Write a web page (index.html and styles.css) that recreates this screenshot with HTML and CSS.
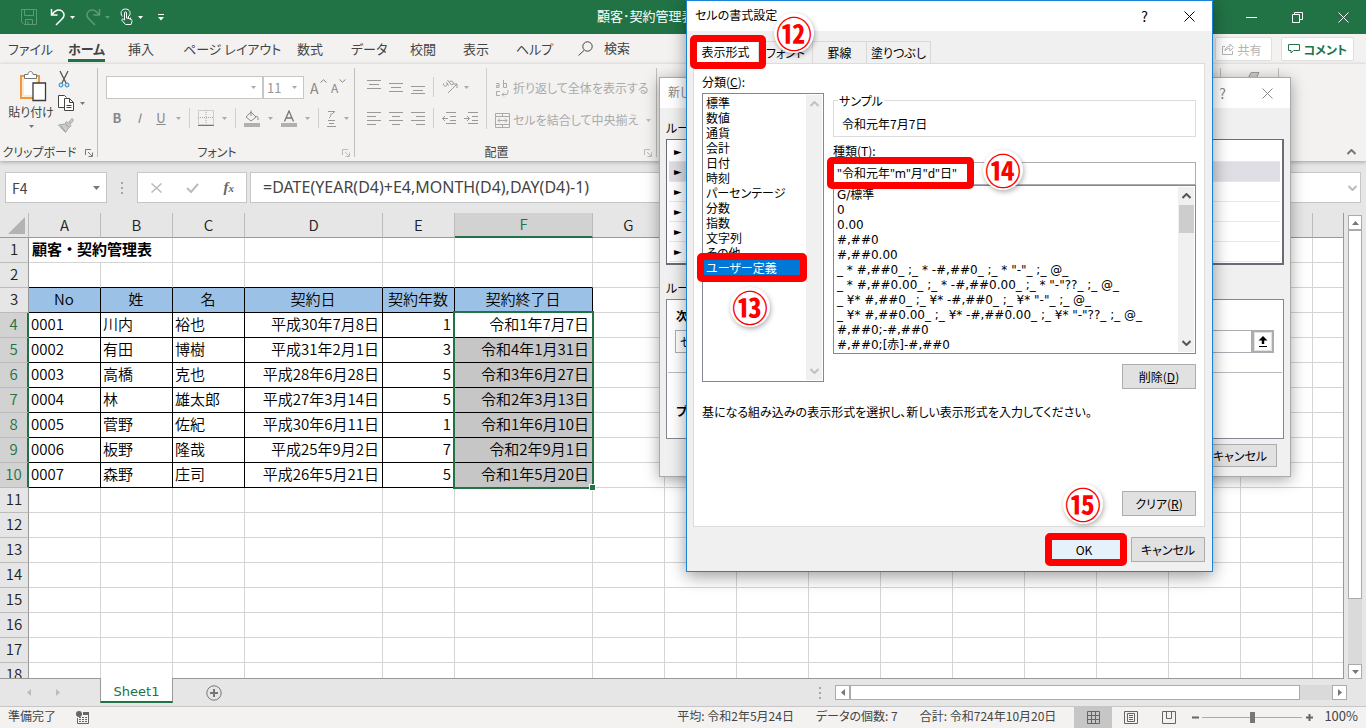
FILE: index.html
```html
<!DOCTYPE html>
<html lang="ja">

<head>
<meta charset="utf-8" />
<title>顧客・契約管理表</title>
<link rel="stylesheet" href="styles.css">
</head>

<body>

<div class="app">

<header class="titlebar">
	<div class="quick">
		<button class="tb dim" aria-label="上書き保存"><svg width="18" height="18" viewBox="0 0 18 18"><path d="M1.5 1.5h15v15H4l-2.5-2.5zM4.500 1.500v6h9v-6M5.500 16.500v-5h7v5M8 16.500v-3"/></svg></button>
		<button class="tb" aria-label="元に戻す"><svg width="16" height="18" viewBox="0 0 16 18"><path class="w15" d="M1.500 1v6h6M2 6.500C5 2 9 .8 12 3c3.500 3 2 6 0 8l-6 6"/></svg></button>
		<svg class="arr" width="5" height="3"><path d="M0 0h5L2.500 3z"/></svg>
		<button class="tb dim" aria-label="やり直し"><svg width="16" height="18" viewBox="0 0 16 18"><path class="w15" d="M14.500 1v6h-6M14 6.500C11 2 7 .8 4 3c-3.500 3-2 6 0 8l6 6"/></svg></button>
		<svg class="arr dimarr" width="5" height="3"><path d="M0 0h5L2.500 3z"/></svg>
		<button class="tb" aria-label="タッチ"><svg width="14" height="18" viewBox="0 0 14 18"><path d="M2.500 8.500C-.5 5 1.500 1 5.500 1s6 4 3.500 7M4.500 12V5c0-1.500 2-1.500 2 0v5l4 1c1.500.4 1.500 1.500 1.500 2.500L11 16.500H5.500L2 12.500c-.6-1 .5-2 1.500-1.300L4.500 12M8.500 8V11M10.500 9.500v2"/></svg></button>
		<svg class="arr" width="5" height="3"><path d="M0 0h5L2.500 3z"/></svg>
		<svg class="arr more" width="6" height="7"><path d="M0 0h6v1H0zM0 3h6L3 6.500z"/></svg>
	</div>
	<div class="doctitle">顧客･契約管理表</div>
	<div class="wins">
		<button class="win" aria-label="最小化"><svg width="11" height="11"><path d="M0 5.500h11"/></svg></button>
		<button class="win" aria-label="元のサイズ"><svg width="11" height="11"><path d="M.5 2.500h7v8h-7zM2.500 2.500v-2h8v7h-3"/></svg></button>
		<button class="win" aria-label="閉じる"><svg width="11" height="11"><path d="M.5.5l10 10M10.500.5l-10 10"/></svg></button>
	</div>
</header>

<nav class="tabs">
	<a href="#">ファイル</a>
	<a href="#" class="on">ホーム</a>
	<a href="#">挿入</a>
	<a href="#">ページ レイアウト</a>
	<a href="#">数式</a>
	<a href="#">データ</a>
	<a href="#">校閲</a>
	<a href="#">表示</a>
	<a href="#">ヘルプ</a>
	<a href="#" class="find"><svg width="15" height="15"><path d="M6 9.500L.5 14.500"/><circle cx="9.500" cy="5.500" r="4.700"/></svg>検索</a>
	<span class="tabbtns">
		<button class="share"><svg width="12" height="12"><path d="M3 3.500H.5v8h10V8M3 8c0-3 2-4.500 5-4.500V1l3.500 3.500L8 8V5.500C6 5.500 4 6 3 8z"/></svg>共有</button>
		<button class="comment"><svg width="12" height="10"><path d="M.5.5h11v6H5.500L3 9V6.500H.5z"/></svg>コメント</button>
	</span>
</nav>

<section class="ribbon">
	<div class="group clip">
		<div class="cliprow">
			<button class="paste">
				<svg width="28" height="32" viewBox="0 0 28 32"><path fill="#fff" stroke="#f0963c" stroke-width="2" d="M2 5h18v22H2z"/><path fill="#fdfdfd" stroke="#fbd98f" d="M4 7h14v18H4z"/><path fill="#fff" stroke="#777" d="M5.500 7.500v-4H9c0-4 5-4 5 0h3.500v4z"/><path fill="#fff" stroke="#3b3b3b" stroke-width="1.300" d="M14 12h12.500v17.500H14z"/></svg>
				<span>貼り付け</span>
				<svg class="arr" width="5" height="3"><path d="M0 0h5L2.500 3z"/></svg>
			</button>
			<div class="clipcol">
				<button class="ic" aria-label="切り取り"><svg width="12" height="17"><path stroke="#555" stroke-width="1.300" d="M2 0l6 12M10 0L4 12"/><circle cx="3" cy="14" r="2" fill="#cfe6f8" stroke="#2a86c8"/><circle cx="9" cy="14" r="2" fill="#cfe6f8" stroke="#2a86c8"/></svg></button>
				<button class="ic" aria-label="コピー"><svg width="16" height="16"><path stroke="#444" fill="#fff" d="M6 12.500H.5V.5h6l2 2"/><path stroke="#444" fill="#fff" d="M6.500 3.500h5l4 4v8h-9zM11.500 3.500v4h4M8.500 10.500h5M8.500 12.500h5"/></svg><svg class="arr" width="5" height="3"><path d="M0 0h5L2.500 3z"/></svg></button>
				<button class="ic" aria-label="書式のコピー"><svg width="16" height="15"><path fill="#ccc" stroke="#a5a5a5" d="M.5 7l6-1 4 4-3 4.500zM7 5l2-1.500 4 4L11.500 9.500zM11 4l3-3.500 1.500 1.500L13 5.500zM3 8l4 5"/></svg></button>
			</div>
		</div>
		<div class="cap">クリップボード</div><svg class="launch" width="8" height="8"><path d="M.5 6V.5H6M3 3l4 4M7.500 3.500v4h-4"/></svg>
	</div>
	<div class="group font">
		<div class="frow">
			<span class="combo fname"><select aria-label="フォント"><option></option></select><svg class="arr" width="5" height="3"><path d="M0 0h5L2.500 3z"/></svg></span><span class="combo fsize"><select aria-label="フォント サイズ"><option>11</option></select><svg class="arr" width="5" height="3"><path d="M0 0h5L2.500 3z"/></svg></span>
			<button class="gt big">A<svg width="7" height="4"><path d="M.5 3.500L3.500.8 6.500 3.500"/></svg></button>
			<button class="gt">A<svg width="7" height="4"><path d="M.5.5l3 2.700 3-2.700"/></svg></button>
		</div>
		<div class="frow second">
			<button class="gt"><b>B</b></button>
			<button class="gt"><i>I</i></button>
			<button class="gt"><u>U</u></button>
			<svg class="arr" width="5" height="3"><path d="M0 0h5L2.500 3z"/></svg>
			<i class="vs"></i>
			<button class="ic" aria-label="罫線"><svg width="16" height="16"><path stroke="#aaa" stroke-dasharray="1 1" d="M.5.5h15v14H.5zM8 0v14M0 7.500h15"/><path stroke="#777" d="M0 15.500h16"/></svg></button>
			<svg class="arr" width="5" height="3"><path d="M0 0h5L2.500 3z"/></svg>
			<i class="vs"></i>
			<button class="ic" aria-label="塗りつぶしの色"><svg width="16" height="17"><path stroke="#888" d="M2 7l5-5 5 5-5 4zM7 6V.5M12 7c2-2 2 1 2 3"/><path fill="#b3afad" stroke="none" d="M0 13h16v4H0z"/></svg></button>
			<svg class="arr" width="5" height="3"><path d="M0 0h5L2.500 3z"/></svg>
			<button class="ic" aria-label="フォントの色"><svg width="16" height="17"><path stroke="#777" stroke-width="1.300" d="M3.500 11.500L8 1l4.500 10.500M5 8h6"/><path fill="#b3afad" stroke="none" d="M0 13h16v4H0z"/></svg></button>
			<svg class="arr" width="5" height="3"><path d="M0 0h5L2.500 3z"/></svg>
			<i class="vs"></i>
			<button class="ic" aria-label="ふりがな"><svg width="9" height="17"><path stroke="#999" d="M1 1.500h7L5 4M4 3.500C4 6 3.500 7 2 8M1 10.500h7M2 13.500h5M0 16.500h9"/></svg></button>
			<svg class="arr" width="5" height="3"><path d="M0 0h5L2.500 3z"/></svg>
		</div>
		<div class="cap">フォント</div><svg class="launch pale" width="8" height="8"><path d="M.5 6V.5H6M3 3l4 4M7.500 3.500v4h-4"/></svg>
	</div>
	<div class="group align">
		<div class="alignrow">
			<div class="aligncol">
				<div class="arow">
					<svg width="14" height="14"><path d="M0 .5h14M2 4.500h10M0 8.500h14"/></svg>
					<svg width="14" height="14"><path d="M0 3.500h14M2 7.500h10M0 11.500h14"/></svg>
					<svg width="14" height="14"><path d="M0 6.500h14M2 10.500h10M0 13.500h14"/></svg>
					<i class="vs"></i>
					<svg width="18" height="16"><path d="M6 14L15 5M11 5h4v4M1.500 4.500a2 2 0 1 0 3-1l2 3M5.500 1l4 5a2 2 0 1 0-2-3"/></svg>
					<svg class="arr" width="5" height="3"><path d="M0 0h5L2.500 3z"/></svg>
				</div>
				<div class="arow">
					<svg width="14" height="14"><path d="M0 1.500h14M0 5.500h9M0 9.500h14M0 13.500h9"/></svg>
					<svg width="14" height="14"><path d="M0 1.500h14M3 5.500h8M0 9.500h14M3 13.500h8"/></svg>
					<svg width="14" height="14"><path d="M0 1.500h14M5 5.500h9M0 9.500h14M5 13.500h9"/></svg>
					<i class="vs"></i>
					<svg width="14" height="14"><path d="M4 1.500h10M8 5.500h6M8 9.500h6M4 12.500h10M6 7.500H.5M3 5L.5 7.500 3 10"/></svg>
					<svg width="14" height="14"><path d="M4 1.500h10M8 5.500h6M8 9.500h6M4 12.500h10M0 7.500h5.500M3 5l2.500 2.500L3 10"/></svg>
				</div>
			</div>
			<div class="wraps">
				<button class="gt"><svg width="15" height="17"><path d="M1 3.500h3v4H1.500v-2H4M8.500 0v7.500h3v-4h-3M5 11.500H1.500v4H5M13 10v2l-1 2.500H7M9 12.500L7 14.500l2 2"/></svg>折り返して全体を表示する</button>
				<button class="gt"><svg width="15" height="15"><path d="M.5.5h14v14H.5zM.5 3.500h14M.5 11.500h14M7.500 0v3M7.500 12v3M3 7.500h9M5 5.500l-2 2 2 2M10 5.500l2 2-2 2"/></svg>セルを結合して中央揃え<svg class="arr" width="5" height="3"><path d="M0 0h5L2.500 3z"/></svg></button>
			</div>
		</div>
		<div class="cap">配置</div><svg class="launch pale" width="8" height="8"><path d="M.5 6V.5H6M3 3l4 4M7.500 3.500v4h-4"/></svg>
	</div>
	<div class="group rest"></div>
	<div class="group edit"><svg width="14" height="14"><path fill="#ccc" stroke="#999" d="M5 1.500h8L9 9.500H1z"/></svg></div>
	<svg class="fold" width="9" height="6"><path d="M.5 5L4.500 1 8.500 5"/></svg>
</section>

<section class="formulabar">
	<span class="box namebox"><input type="text" value="F4" aria-label="名前ボックス"><svg class="arr" width="7" height="4"><path d="M0 0h7L3.500 4z"/></svg></span>
	<i class="dots"></i>
	<span class="box fx">
		<svg width="11" height="10"><path class="w15" d="M.5.5l10 9M10.500.5l-10 9"/></svg>
		<svg width="13" height="10"><path class="w2" d="M1 5l4 4 7-8"/></svg>
		<em>f<small>x</small></em>
	</span>
	<span class="box formula"><input type="text" value="=DATE(YEAR(D4)+E4,MONTH(D4),DAY(D4)-1)" aria-label="数式"><svg width="9" height="6"><path class="w2" d="M.5 1L4.500 5 8.500 1"/></svg></span>
</section>

<main class="work">
	<div class="sheet">
		<table class="grid" id="grid"></table>
	</div>
	<div class="vscroll">
		<button aria-label="上へ"><svg class="arr" width="7" height="4"><path d="M0 4h7L3.500 0z"/></svg></button>
		<div class="vthumb"></div>
		<div class="track"></div>
		<button aria-label="下へ"><svg class="arr" width="7" height="4"><path d="M0 0h7L3.500 4z"/></svg></button>
	</div>
</main>

<div class="sheetbar">
	<svg class="arr nav" width="4" height="7"><path d="M4 0v7L0 3.500z"/></svg>
	<svg class="arr nav" width="4" height="7"><path d="M0 0v7l4-3.500z"/></svg>
	<button class="sheettab">Sheet1</button>
	<button class="add" aria-label="新しいシート"><svg width="16" height="16"><circle cx="8" cy="8" r="7.200"/><path class="w2" d="M8 4v8M4 8h8"/></svg></button>
	<i class="dots"></i>
	<div class="hscroll">
		<button aria-label="左へ"><svg class="arr" width="4" height="7"><path d="M4 0v7L0 3.500z"/></svg></button>
		<div class="hthumb"></div>
		<div class="track"></div>
		<button aria-label="右へ"><svg class="arr" width="4" height="7"><path d="M0 0v7l4-3.500z"/></svg></button>
	</div>
</div>

<footer class="status">
	<span>準備完了</span>
	<svg class="rec" width="13" height="13"><path class="ln" d="M1.500 7v5.500h11V1.500H7M7 3.500h6"/><path class="ln" d="M3 6.500h8M3 8.500h8M3 10.500h8" stroke-dasharray="2 1"/><circle cx="3" cy="3" r="3"/><path d="M7 1h6v3H7z"/></svg>
	<span class="sums"><span>平均: 令和2年5月24日</span><span>データの個数: 7</span><span>合計: 令和724年10月20日</span></span>
	<button class="view on" aria-label="標準"><svg width="13" height="13"><path d="M.5.5h12v12H.5zM4.500 0v13M8.500 0v13M0 4.500h13M0 8.500h13"/></svg></button>
	<button class="view" aria-label="ページ レイアウト"><svg width="14" height="13"><path d="M.5.5h13v12H.5zM3.500 2.500h7v8h-7zM5 4.500h4M5 6.500h4M5 8.500h4"/></svg></button>
	<button class="view" aria-label="改ページ プレビュー"><svg width="14" height="13"><path d="M.5.5h13v12H.5zM4.500 0v7.500h5V0"/></svg></button>
	<button class="zb" aria-label="縮小"><svg width="7" height="7"><path class="w2" d="M0 3.500h7"/></svg></button>
	<input class="zoom" type="range" min="0" max="100" value="50" aria-label="ズーム">
	<button class="zb" aria-label="拡大"><svg width="7" height="7"><path class="w2" d="M0 3.500h7M3.500 0v7"/></svg></button>
	<span class="pct">100%</span>
</footer>

</div>

<!-- rule dialog, below the format dialog -->
<div class="dialog rule">
	<div class="dtitle"><span>新しい書式ルール</span><button>?</button><button aria-label="閉じる"><svg width="11" height="11"><path d="M.5.5l10 10M10.500.5l-10 10"/></svg></button></div>
	<div class="rbody">
		<div class="lbl">ルールの種類を選択してください(S):</div>
		<ul class="rules">
			<li>►</li>
			<li class="sel">►</li>
			<li>►</li>
			<li>►</li>
			<li>►</li>
			<li>►</li>
		</ul>
		<div class="lbl">ルールの内容を編集してください(E):</div>
		<div class="desc">
			<b>次のセルのみを書式設定(O):</b>
			<div class="pick"><select aria-label="条件"><option>セルの値</option></select><input type="text" aria-label="値"><button aria-label="参照"><svg width="10" height="11"><path fill="#000" d="M5 0l4.500 4.500H6.200V8H3.800V4.500H.5zM1 10h8v1H1z"/></svg></button></div>
			<hr>
			<b>プレビュー:</b>
		</div>
		<div class="dfoot"><button class="btn">キャンセル</button></div>
	</div>
</div>

<div class="dialog format">
	<div class="dtitle"><span>セルの書式設定</span><button>?</button><button aria-label="閉じる"><svg width="11" height="11"><path d="M.5.5l10 10M10.500.5l-10 10"/></svg></button></div>
	<div class="fbody">
		<div class="dtabs">
			<button class="on">表示形式</button>
			<button>フォント</button>
			<button>罫線</button>
			<button>塗りつぶし</button>
		</div>
		<div class="panel">
			<div class="cols">
				<div class="left">
					<div class="lbl" id="cat">分類(<u>C</u>):</div>
					<div class="list cats">
						<ul role="listbox" aria-labelledby="cat">
							<li>標準</li>
							<li>数値</li>
							<li>通貨</li>
							<li>会計</li>
							<li>日付</li>
							<li>時刻</li>
							<li>パーセンテージ</li>
							<li>分数</li>
							<li>指数</li>
							<li>文字列</li>
							<li>その他</li>
							<li class="sel">ユーザー定義</li>
						</ul>
						<div class="sb off"><svg width="9" height="6"><path d="M.5 5L4.500 1 8.500 5"/></svg><svg width="9" height="6"><path d="M.5 1L4.500 5 8.500 1"/></svg></div>
					</div>
				</div>
				<div class="right">
					<fieldset><legend>サンプル</legend>令和元年7月7日</fieldset>
					<label class="lbl" for="kind">種類(<u>T</u>):</label>
					<input id="kind" type="text" value="&quot;令和元年&quot;m&quot;月&quot;d&quot;日&quot;">
					<div class="list kinds">
						<ul>
							<li>G/標準</li>
							<li>0</li>
							<li>0.00</li>
							<li>#,##0</li>
							<li>#,##0.00</li>
							<li>_ * #,##0_ ;_ * -#,##0_ ;_ * "-"_ ;_ @_ </li>
							<li>_ * #,##0.00_ ;_ * -#,##0.00_ ;_ * "-"??_ ;_ @_ </li>
							<li>_ ¥* #,##0_ ;_ ¥* -#,##0_ ;_ ¥* "-"_ ;_ @_ </li>
							<li>_ ¥* #,##0.00_ ;_ ¥* -#,##0.00_ ;_ ¥* "-"??_ ;_ @_ </li>
							<li>#,##0;-#,##0</li>
							<li>#,##0;[赤]-#,##0</li>
						</ul>
						<div class="sb"><svg width="9" height="6"><path d="M.5 5L4.500 1 8.500 5"/></svg><i></i><svg width="9" height="6"><path d="M.5 1L4.500 5 8.500 1"/></svg></div>
					</div>
					<button class="btn">削除(<u>D</u>)</button>
				</div>
			</div>
			<p class="note">基になる組み込みの表示形式を選択し、新しい表示形式を入力してください。</p>
			<button class="btn clear">クリア(<u>R</u>)</button>
		</div>
		<div class="dfoot"><button class="btn ok">OK</button><button class="btn">キャンセル</button></div>
	</div>
	<!-- step marks -->
	<i class="mark m12"></i><span class="num n12">⑫</span>
	<i class="mark m13"></i><span class="num n13">⑬</span>
	<i class="mark m14"></i><span class="num n14">⑭</span>
	<i class="mark m15"></i><span class="num n15">⑮</span>
</div>

<script src="script.js"></script>
</body>

</html>
```
FILE: styles.css
```css
* {
	box-sizing: border-box;
}
body {
	margin: 0;
	overflow: hidden;
	font-family: "Noto Sans CJK JP", sans-serif;
	font-feature-settings: "palt";
	font-size: 12px;
	color: #444;
}
button, input, select {
	font: inherit;
	font-feature-settings: inherit;
	color: inherit;
	margin: 0;
	padding: 0;
	border: 0;
	background: none;
	border-radius: 0;
	outline: 0;
}
svg {
	fill: none;
	stroke: currentColor;
	flex: none;
	display: block;
}
svg.arr {
	fill: #777;
	stroke: none;
}
svg .w15 { stroke-width: 1.5; }
svg .w2 { stroke-width: 2; }
ul {
	list-style: none;
	margin: 0;
	padding: 0;
}
a {
	color: inherit;
	text-decoration: none;
}
.app {
	height: 100vh;
	display: flex;
	flex-direction: column;
	background: #e6e6e6;
}

/* title bar */
.titlebar {
	height: 34px;
	flex: none;
	background: #217346;
	color: #fff;
	display: grid;
	grid-template-columns: 1fr 172px 1fr;
	align-items: center;
}
.quick {
	display: flex;
	align-items: center;
	padding-left: 20px;
}
.quick .arr {
	fill: #fff;
	margin: 0 10px 0 4px;
}
.quick .tb + .tb { margin-left: 12px; }
.quick .dim { color: #5a9a77; }
.quick .dimarr { fill: #5a9a77; }
.quick .more { margin-left: 5px; }
.doctitle {
	font-size: 13px;
	line-height: 30px;
	padding-bottom: 2px;
	white-space: nowrap;
}
.wins {
	display: flex;
	justify-content: flex-end;
}
.win {
	width: 46px;
	height: 34px;
	display: flex;
	align-items: center;
	justify-content: center;
}

/* ribbon */
.tabs {
	height: 30px;
	flex: none;
	background: #f3f2f1;
	display: grid;
	grid-template-columns: 60px 60px 55px 114px 54px 59px 53px 53px 62px 60px 1fr;
	padding-left: 8px;
	font-size: 13px;
}
.tabs a {
	height: 28px;
	line-height: 30px;
	white-space: nowrap;
	justify-self: start;
}
.tabs .on {
	font-weight: bold;
	border-bottom: 3px solid #217346;
}
.tabs .find {
	display: flex;
	align-items: center;
	gap: 11px;
}
.tabbtns {
	display: flex;
	justify-content: flex-end;
	gap: 9px;
	padding: 3px 12px 3px 0;
}
.tabbtns button {
	height: 24px;
	padding: 0 6px;
	display: flex;
	align-items: center;
	gap: 4px;
	background: #fff;
	border: 1px solid #e1dfdd;
	border-radius: 2px;
	white-space: nowrap;
	font-size: 12px;
}
.tabbtns .share { color: #b5b3b1; padding-right: 9px; }
.tabbtns .comment {
	color: #217346;
	font-weight: bold;
}
.ribbon {
	height: 97px;
	flex: none;
	background: #f3f2f1;
	display: flex;
	position: relative;
	box-shadow: 0 1px 4px rgba(0,0,0,.3);
	padding: 4px 0;
}
.group {
	border-right: 1px solid #c0bebc;
	position: relative;
	display: flex;
	flex-direction: column;
}
.cap {
	margin-top: auto;
	text-align: center;
	line-height: 11px;
	padding-right: 18px;
}
.launch {
	position: absolute;
	right: 4px;
	bottom: 0;
	color: #777;
}
.launch.pale { color: #bbb; }
.clip { width: 98px; }
.cliprow {
	display: flex;
	padding-left: 10px;
	gap: 6px;
	height: 64px;
}
.paste {
	display: flex;
	flex-direction: column;
	align-items: center;
	width: 42px;
	padding-top: 3px;
	white-space: nowrap;
}
.paste > svg:first-child { margin-left: 4px; }
.paste span { line-height: 18px; }
.paste .arr { margin-top: 4px; }
.clipcol {
	display: flex;
	flex-direction: column;
	gap: 7px;
	padding-top: 3px;
}
.ic {
	display: flex;
	align-items: center;
	gap: 6px;
}
.font {
	width: 257px;
	color: #999;
}
.font .cap, .align .cap { color: #444; }
.frow {
	display: flex;
	align-items: center;
	padding: 8px 0 0 8px;
}
.frow.second {
	height: 20px;
	margin-top: 9px;
	padding: 0 0 0 12px;
	gap: 8px;
}
.second .arr, .arow .arr { fill: #aaa; }
.combo {
	display: flex;
	align-items: center;
	height: 23px;
	border: 1px solid #c6c6c6;
	background: #fff;
	padding-right: 6px;
}
.combo .arr { fill: #aaa; }
.combo select {
	appearance: none;
	flex: 1;
	padding-left: 3px;
	font-size: 13px;
}
.fname { width: 157px; }
.fsize {
	width: 41px;
	margin-right: 6px;
}
.gt {
	display: flex;
	align-items: center;
	gap: 1px;
	color: #aaa;
	white-space: nowrap;
	line-height: 18px;
}
.frow > .gt { width: 21px; color: #8a8886; }
.frow > .gt svg { align-self: flex-start; }
.frow > .gt.big { font-size: 14px; }
.second > .gt {
	width: 14px;
	justify-content: center;
	font-size: 13px;
}
.vs {
	width: 1px;
	height: 20px;
	background: #d2d0ce;
}
.align {
	width: 302px;
	color: #999;
}
.alignrow {
	display: flex;
	padding-left: 12px;
}
.aligncol {
	display: flex;
	flex-direction: column;
	gap: 9px;
	padding-top: 8px;
	border-right: 1px solid #d2d0ce;
	width: 120px;
}
.arow {
	display: flex;
	align-items: center;
	gap: 8px;
	height: 22px;
}
.arow svg + .arr { margin-left: -4px; }
.wraps {
	display: flex;
	flex-direction: column;
	gap: 14px;
	padding: 11px 0 0 8px;
}
.wraps .gt { height: 18px; gap: 3px; }
.wraps .gt .arr { fill: #bbb; margin-left: 5px; }
.group.rest { flex: 1; }
.edit {
	width: 58px;
	padding-left: 25px;
	padding-top: 3px;
	margin-right: 87px;
}
.fold {
	position: absolute;
	right: 10px;
	bottom: 6px;
	stroke-width: 2;
	color: #777;
}

/* formula bar */
.formulabar {
	height: 52px;
	flex: none;
	padding: 11px 5px 10px;
	display: flex;
	align-items: center;
}
.box {
	height: 31px;
	background: #fff;
	border: 1px solid #c6c6c6;
	display: flex;
	align-items: center;
}
.namebox {
	width: 102px;
	padding: 0 6px;
	font-size: 14px;
}
.namebox input {
	width: 80px;
	flex: 1;
}
.dots {
	width: 2px;
	height: 12px;
	margin: 0 14px;
	background: repeating-linear-gradient(#a6a6a6 0 2px, transparent 2px 5px);
}
.fx {
	width: 110px;
	justify-content: space-between;
	padding: 0 12px 0 13px;
	color: #bbb;
}
.fx em {
	font: italic bold 15px "Liberation Serif", serif;
	color: #666;
}
.fx small { font-size: 11px; }
.formula {
	flex: 1;
	margin-left: 3px;
	padding: 0 3px 0 12px;
	color: #bbb;
}
.formula input {
	flex: 1;
	font-family: "Noto Sans", "Noto Sans CJK JP", sans-serif;
	font-size: 16px;
	line-height: 24px;
	padding-bottom: 2px;
	color: #444;
}

/* sheet */
.work {
	flex: 1;
	min-height: 0;
	display: flex;
	padding-right: 4px;
}
.sheet {
	flex: 1;
	min-width: 0;
	overflow: hidden;
	border-right: 1px solid #999;
	border-bottom: 1px solid #999;
}
.grid {
	table-layout: fixed;
	width: 0;
	border-collapse: separate;
	border-spacing: 0;
	font-feature-settings: normal;
	font-size: 15px;
	line-height: 22px;
	color: #000;
}
.grid col.h { width: 29px; }
.grid col.s { width: 72px; }
.grid col.l { width: 138px; }
.grid td, .grid th {
	height: 25px;
	padding: 0 3px 2px 2px;
	border-right: 1px solid #d4d4d4;
	border-bottom: 1px solid #d4d4d4;
	background: #fff;
	white-space: nowrap;
	font-weight: 350;
}
.grid th {
	background: #e6e6e6;
	padding: 0 0 2px;
	border-color: #bbb;
	color: #222;
}
.grid thead th {
	padding-bottom: 1px;
	border-bottom-color: #999;
}
.grid tbody th { border-right-color: #999; }
.grid tbody th.on {
	background: #d2d2d2;
	color: #217346;
	border-right: 2px solid #217346;
}
.grid thead th.on {
	background: #d2d2d2;
	color: #217346;
	border-bottom: 2px solid #217346;
}
.grid td.t { font-weight: bold; padding-left: 3px; }
.grid .pre td.k { border-bottom-color: #000; }
.grid .hd td.k {
	background: #9bc2e6;
	text-align: center;
	border-color: #000;
}
.grid .dt td.k { border-color: #000; }
.grid .dt td.r { text-align: right; }
.grid .dt td.f { background: #c6c6c6; }
.grid .dt td.cur {
	background: #fff;
	position: relative;
}
.corner { float: right; margin: 2px 3px 0 0; }
.grid svg.corner { fill: #b3b3b3; stroke: none; }
.range {
	position: absolute;
	left: -2px;
	top: -2px;
	width: 141px;
	height: 178px;
	border: 2px solid #217346;
}
.range::after {
	content: "";
	position: absolute;
	right: -3px;
	bottom: -3px;
	width: 5px;
	height: 5px;
	background: #217346;
	outline: 1px solid #fff;
}
.vscroll {
	width: 14px;
	margin: 2px 0 0 4px;
	display: flex;
	flex-direction: column;
}
.vscroll button, .hscroll button {
	width: 14px;
	height: 15px;
	flex: none;
	background: #fff;
	border: 1px solid #ababab;
	display: flex;
	align-items: center;
	justify-content: center;
}
.vthumb {
	flex: 85;
	background: #fff;
	border: 1px solid #ababab;
}
.vscroll .track { flex: 15; }
.track { background: #dadada; }

.sheetbar {
	height: 27px;
	flex: none;
	display: flex;
	align-items: center;
	padding-right: 19px;
}
.arr.nav {
	fill: #bbb;
	margin-left: 27px;
}
.arr.nav + .arr.nav { margin: 0 40px 0 25px; }
.sheettab {
	align-self: flex-start;
	width: 73px;
	height: 25px;
	padding-top: 3px;
	background: #fff;
	border: 1px solid #999;
	border-width: 0 1px 2px;
	border-bottom-color: #217346;
	color: #217346;
	font-family: "DejaVu Sans", sans-serif;
	font-size: 13px;
	margin-top: -1px;
}
.add {
	margin: 0 auto 0 33px;
	color: #777;
}
.hscroll {
	display: flex;
	width: 512px;
	height: 15px;
}
.hscroll button { width: 15px; }
.hthumb {
	flex: 1;
	background: #fff;
	border: 1px solid #ababab;
}
.hscroll .track {
	width: 32px;
}
.status {
	height: 22px;
	flex: none;
	background: #f3f2f1;
	border-top: 1px solid #c6c6c6;
	display: flex;
	align-items: center;
	padding: 0 8px;
	white-space: nowrap;
	line-height: 18px;
}
.status > span { padding-bottom: 3px; }
.status .rec {
	margin-left: 20px;
	fill: #666;
	stroke: none;
}
.status .rec .ln { fill: none; stroke: #666; }
.sums {
	margin-left: auto;
	margin-right: 18px;
	display: flex;
	gap: 22px;
}
.view {
	width: 38px;
	height: 21px;
	display: flex;
	align-items: center;
	justify-content: center;
	color: #666;
}
.view.on { background: #c6c6c6; }
.zb {
	width: 14px;
	height: 18px;
	display: flex;
	align-items: center;
	justify-content: center;
	color: #666;
}
.zoom {
	appearance: none;
	width: 100px;
	height: 12px;
	background: linear-gradient(#aaa, #aaa) center / 100% 1px no-repeat;
}
.zoom::-webkit-slider-thumb {
	appearance: none;
	width: 5px;
	height: 11px;
	background: #777;
}
.pct {
	font-size: 13px;
	margin-left: 8px;
}

/* dialogs */
.dialog {
	position: absolute;
	display: flex;
	flex-direction: column;
	background: #f0f0f0;
	color: #000;
	line-height: 15px;
}
.dtitle {
	height: 30px;
	flex: none;
	background: #fff;
	display: flex;
	align-items: center;
	padding-left: 8px;
}
.dtitle span { flex: 1; padding-bottom: 3px; }
.dtitle button {
	width: 45px;
	height: 28px;
	display: flex;
	align-items: center;
	justify-content: center;
	font-size: 14px;
}
.btn {
	width: 74px;
	height: 25px;
	background: #e1e1e1;
	border: 1px solid #adadad;
	white-space: nowrap;
}
.rule {
	left: 659px;
	top: 77px;
	width: 632px;
	height: 400px;
	border: 1px solid #aaa;
	box-shadow: 0 3px 14px rgba(0,0,0,.35);
}
.rule .dtitle { color: #888; }
.rbody { padding: 12px 6px 0; }
.rbody .lbl { margin-bottom: 4px; }
.rules {
	height: 126px;
	border: 2px solid #6b6b75;
	border-width: 1px 2px 2px 1px;
	background: #fff;
	padding: 2px;
	margin-bottom: 15px;
}
.rules li {
	height: 20px;
	line-height: 20px;
	border-bottom: 1px solid #e8e8e8;
	padding-left: 5px;
	font-family: "DejaVu Sans", sans-serif;
	font-size: 10px;
}
.rules .sel { background: #dfdee4; }
.desc {
	height: 140px;
	border: 1px solid #828790;
	background: #fff;
	padding: 8px 1px;
	margin-bottom: 5px;
}
.desc b { margin-left: 8px; }
.desc hr {
	border: 0;
	border-top: 1px solid #bbb;
	margin: 19px 0 30px;
}
.pick {
	display: flex;
	height: 23px;
	padding: 0 8px 0 7px;
	margin-top: 7px;
}
.pick select {
	appearance: none;
	width: 140px;
	border: 1px solid #abadb3;
	padding-left: 4px;
	margin-right: 10px;
}
.pick input {
	flex: 1;
	border: 1px solid #abadb3;
}
.pick button {
	width: 22px;
	border: 2px solid #abadb3;
	box-shadow: inset 0 0 0 1px #e1e1e1;
	display: flex;
	align-items: center;
	justify-content: center;
}
.pick svg { stroke: none; }
.dfoot {
	display: flex;
	justify-content: flex-end;
	gap: 10px;
}
.rule .dfoot { padding-right: 7px; }
.rule .btn { height: 23px; }

.format {
	left: 686px;
	top: 0;
	width: 527px;
	height: 572px;
	border: 1px solid #1883d7;
	box-shadow: 0 4px 16px rgba(0,0,0,.4);
}
.fbody {
	flex: 1;
	min-height: 0;
	padding: 10px 7px 9px 6px;
	display: flex;
	flex-direction: column;
}
.dtabs {
	display: flex;
	height: 22px;
}
.dtabs button {
	border: 1px solid #d9d9d9;
	border-width: 1px 1px 0 0;
	padding: 0;
	width: 54px;
	white-space: nowrap;
}
.dtabs .on {
	background: #fff;
	margin-bottom: -1px;
	padding-bottom: 4px;
	width: 66px;
}
.dtabs button:last-child { width: 64px; }
.panel {
	flex: 1;
	background: #fff;
	border: 1px solid #dcdcdc;
	padding: 10px 8px 10px 8px;
	display: flex;
	flex-direction: column;
}
.cols {
	display: flex;
	gap: 9px;
}
.left { width: 122px; }
.right {
	flex: 1;
	padding-top: 19px;
	display: flex;
	flex-direction: column;
}
.right .btn {
	align-self: flex-end;
	margin-top: 10px;
}
.list {
	border: 1px solid #828790;
	display: flex;
	padding: 1px;
	overflow: hidden;
}
.left .list {
	height: 289px;
	margin-top: 4px;
}
.list ul { flex: 1; white-space: nowrap; }
.list li { height: 15px; padding-left: 2px; }
.list .sel {
	background: #0078d7;
	color: #fff;
}
.kinds {
	height: 169px;
	font-family: "DejaVu Sans", "Noto Sans CJK JP", sans-serif;
}
.kinds ul {
	padding-top: 1px;
}
.sb {
	width: 16px;
	background: #f0f0f0;
	display: flex;
	flex-direction: column;
	align-items: center;
	justify-content: space-between;
	padding: 6px 0;
	color: #555;
}
.sb svg { stroke-width: 2; }
.sb.off { color: #c0c0c0; }
.sb i {
	width: 15px;
	height: 28px;
	background: #cdcdcd;
	margin: 6px 0 auto;
}
fieldset {
	margin: 0 0 6px;
	border: 1px solid #dcdcdc;
	height: 44px;
	padding: 8px 8px 0;
	min-width: 0;
}
legend {
	padding: 0 1px;
	margin-left: -4px;
}
#kind {
	height: 23px;
	border: 1px solid #abadb3;
	margin-top: 4px;
	padding: 0 3px 2px;
	font-family: "Noto Sans", "Noto Sans CJK JP", sans-serif;
}
.note { margin: 15px 0 0; }
.clear {
	margin-top: auto;
	align-self: flex-end;
}
.fbody .dfoot { padding-top: 10px; }
.ok {
	background: #e5f1fb;
	border-color: #0078d7;
}

.mark {
	position: absolute;
	border: 7px solid #f00;
	border-radius: 5px;
}
.m12 { left: 3px; top: 34px; width: 76px; height: 34px; }
.m13 { left: 10px; top: 252px; width: 110px; height: 29px; }
.m14 { left: 140px; top: 156px; width: 147px; height: 32px; }
.m15 { left: 358px; top: 532px; width: 82px; height: 33px; }
.num {
	position: absolute;
	width: 40px;
	height: 40px;
	border-radius: 50%;
	background: #fff;
	box-shadow: 1px 2px 5px rgba(0,0,0,.3);
	color: #f00;
	font-size: 36px;
	font-weight: bold;
	line-height: 38px;
	display: flex;
	justify-content: center;
	font-feature-settings: normal;
}
.n12 { left: 87px; top: 12px; }
.n13 { left: 43px; top: 286px; }
.n14 { left: 296px; top: 149px; }
.n15 { left: 376px; top: 483px; }
```
FILE: script.js
```js
var letters = "ABCDEFGHIJKLMNOPQRST".split("");
var rows = [
	["0001", "川内", "裕也", "平成30年7月8日", "1", "令和1年7月7日"],
	["0002", "有田", "博樹", "平成31年2月1日", "3", "令和4年1月31日"],
	["0003", "高橋", "克也", "平成28年6月28日", "5", "令和3年6月27日"],
	["0004", "林", "雄太郎", "平成27年3月14日", "5", "令和2年3月13日"],
	["0005", "菅野", "佐紀", "平成30年6月11日", "1", "令和1年6月10日"],
	["0006", "板野", "隆哉", "平成25年9月2日", "7", "令和2年9月1日"],
	["0007", "森野", "庄司", "平成26年5月21日", "5", "令和1年5月20日"]
];
var head = ["No", "姓", "名", "契約日", "契約年数", "契約終了日"];

var html = '<colgroup><col class="h">';
letters.forEach(function (c) {
	html += '<col class="' + (c == "D" || c == "F" ? "l" : "s") + '">';
});
html += '</colgroup><thead><tr><th><svg class="corner" width="17" height="17"><path d="M17 0v17H0z"/></svg></th>';
letters.forEach(function (c) {
	html += '<th' + (c == "F" ? ' class="on"' : '') + '>' + c + '</th>';
});
html += '</tr></thead><tbody>';

for (var r = 1; r <= 18; r++) {
	var data = r == 3 ? head : rows[r - 4];
	var cls = r == 2 ? "pre" : r == 3 ? "hd" : data ? "dt" : "";
	html += '<tr class="' + cls + '"><th' + (cls == "dt" ? ' class="on"' : '') + '>' + r + '</th>';
	for (var c = 0; c < letters.length; c++) {
		if (r == 1 && c == 0) {
			html += '<td class="t" colspan="2">顧客・契約管理表</td>';
			c++;
			continue;
		}
		var k = c < 6 ? "k" : "";
		if (c > 2 && c < 6) k += " r";
		if (c == 5) k += r == 4 ? " cur" : " f";
		html += '<td class="' + k + '">' + (data && data[c] || "");
		// selection frame hangs on the active cell
		if (r == 4 && c == 5) html += '<i class="range"></i>';
		html += '</td>';
	}
	html += '</tr>';
}
document.getElementById("grid").innerHTML = html + '</tbody>';
```
